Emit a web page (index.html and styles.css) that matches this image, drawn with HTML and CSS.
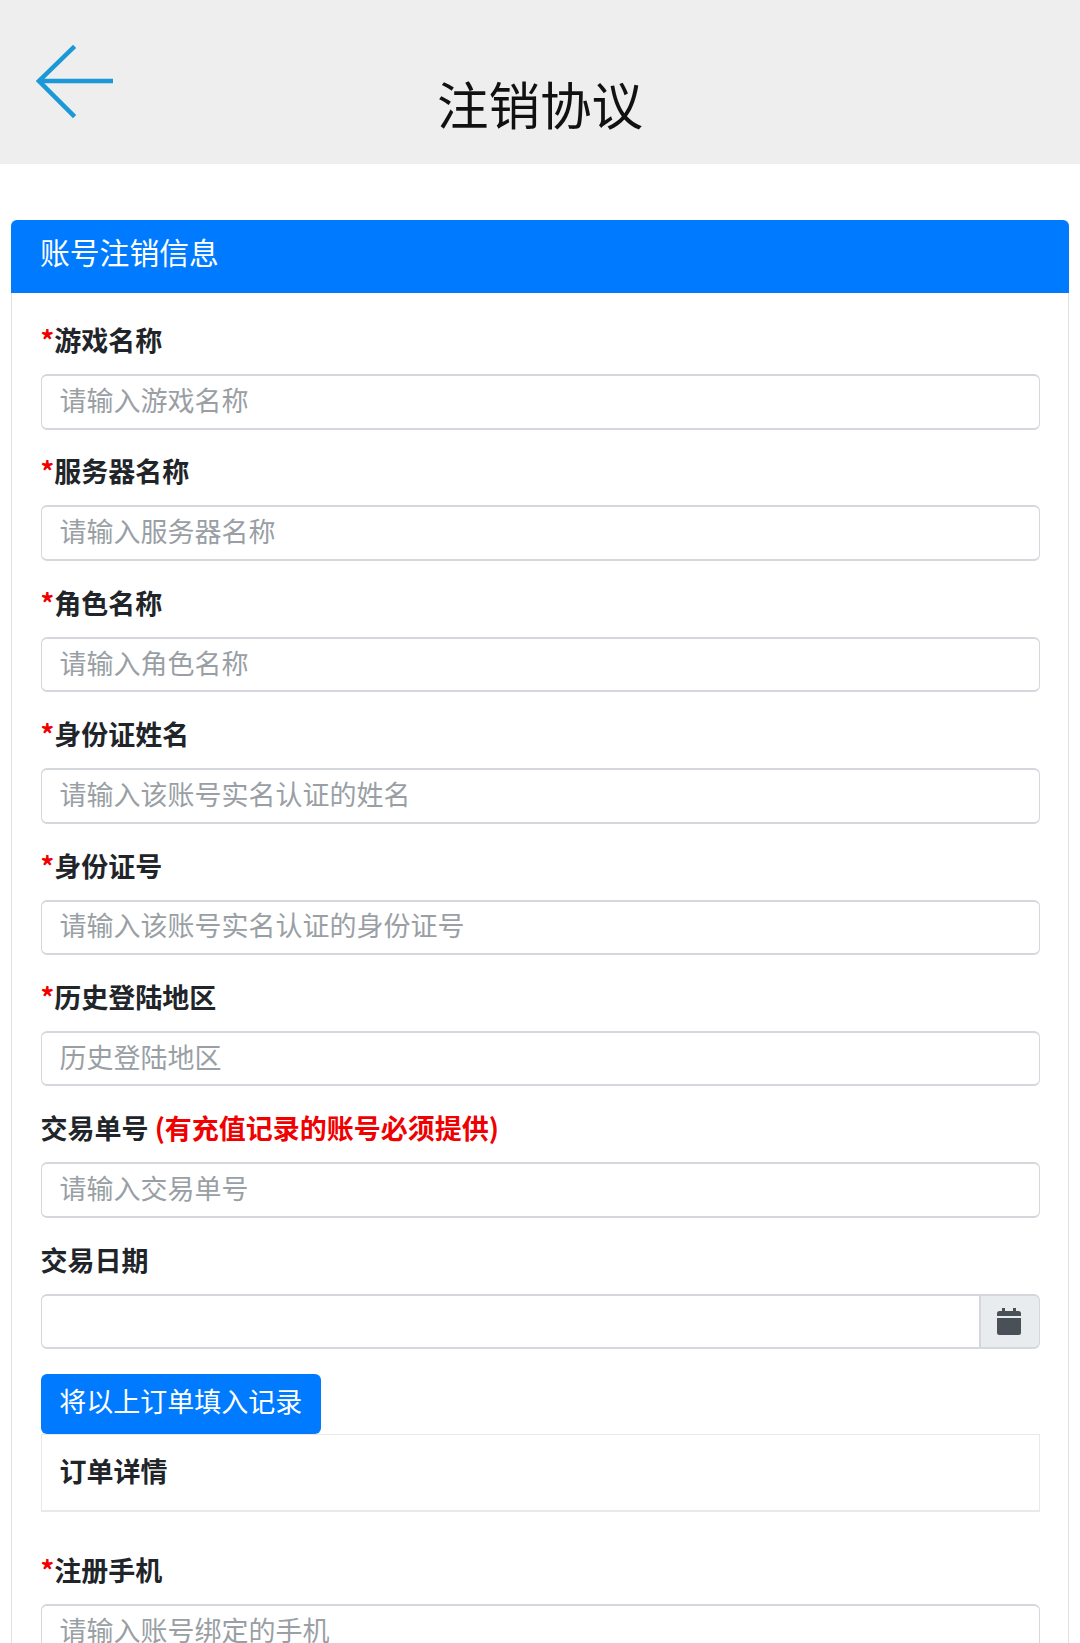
FILE: index.html
```html
<!DOCTYPE html>
<html lang="zh-CN">
<head>
  <meta charset="UTF-8" />
  <meta name="viewport" content="width=device-width, initial-scale=1.0"/>
  <title>注销协议</title>
  <link rel="stylesheet" href="styles.css">
</head>
<body>
<header class="top-bar">
  <a class="back-link" href="#" aria-label="返回">
    <svg width="84" height="76" viewBox="0 0 84 76" fill="none" stroke="#1a98d8" stroke-width="4.500" stroke-linecap="square">
      <path d="M37 5 L3 38 L37 72"/>
      <path d="M3 38 H77" stroke-linecap="butt"/>
    </svg>
  </a>
  <h1 class="page-title">注销协议</h1>
</header>

<section class="card">
  <h2 class="card-header">账号注销信息</h2>
  <form class="card-body">
    <div class="field">
      <label class="field-label"><span class="req">*</span>游戏名称</label>
      <input class="text-input" type="text" placeholder="请输入游戏名称">
    </div>
    <div class="field">
      <label class="field-label"><span class="req">*</span>服务器名称</label>
      <input class="text-input" type="text" placeholder="请输入服务器名称">
    </div>
    <div class="field">
      <label class="field-label"><span class="req">*</span>角色名称</label>
      <input class="text-input" type="text" placeholder="请输入角色名称">
    </div>
    <div class="field">
      <label class="field-label"><span class="req">*</span>身份证姓名</label>
      <input class="text-input" type="text" placeholder="请输入该账号实名认证的姓名">
    </div>
    <div class="field">
      <label class="field-label"><span class="req">*</span>身份证号</label>
      <input class="text-input" type="text" placeholder="请输入该账号实名认证的身份证号">
    </div>
    <div class="field">
      <label class="field-label"><span class="req">*</span>历史登陆地区</label>
      <input class="text-input" type="text" placeholder="历史登陆地区">
    </div>
    <div class="field">
      <label class="field-label">交易单号 <span class="req">(有充值记录的账号必须提供)</span></label>
      <input class="text-input" type="text" placeholder="请输入交易单号">
    </div>
    <div class="field">
      <label class="field-label">交易日期</label>
      <div class="input-group">
        <input class="text-input" type="text">
        <span class="input-addon">
          <svg width="24" height="27" viewBox="0 0 24 27" fill="#495057">
            <path d="M5 0h3v3h8V0h3v3h2.5A2.5 2.5 0 0 1 24 5.500V8H0V5.500A2.500 2.500 0 0 1 2.500 3H5z"/>
            <path d="M0 10h24v14.500a2.500 2.500 0 0 1-2.500 2.500h-19A2.500 2.500 0 0 1 0 24.500z"/>
          </svg>
        </span>
      </div>
    </div>
    <button class="add-btn" type="button">将以上订单填入记录</button>
    <div class="order-box">
      <h3 class="order-title">订单详情</h3>
    </div>
    <div class="field">
      <label class="field-label"><span class="req">*</span>注册手机</label>
      <input class="text-input" type="text" placeholder="请输入账号绑定的手机">
    </div>
  </form>
</section>
</body>
</html>
```

FILE: styles.css
```css
* { box-sizing: border-box; }
html, body { height: 1643px; overflow: hidden; }
body { margin: 0; background: white; color: #212529; font-family: "Noto Sans CJK SC", "Noto Sans", sans-serif; font-size: 27px; }

.top-bar { height: 164px; background: #eeeeee; display: grid; grid-template-columns: 1fr auto 1fr; align-items: start; }
.back-link { display: block; margin: 43px 0 0 36px; height: 76px; }
.page-title { margin: 69px 0 0; font-size: 51.500px; font-weight: 400; line-height: 68px; color: #111; }

.card { margin: 56px 11px 0; border: 1px solid #e2e2e2; border-radius: 6px 6px 0 0; }
.card-header { margin: -1px -1px 0; height: 73px; padding: 0 29px; background: #007bff; color: white; font-size: 29.800px; font-weight: 400; line-height: 62px; border-radius: 6px 6px 0 0; }
.card-body { padding: 27px 28.500px 0; }

.field { margin-bottom: 21.900px; }
.field-label { display: block; margin-bottom: 13.250px; font-weight: 700; line-height: 40.750px; }
.req { color: #f00000; }

.text-input { display: block; width: 100%; height: 55.500px; padding: 0 18px 5px; border: 1px solid #d4d8dc; border-top-width: 2px; border-bottom-width: 2px; border-radius: 6px; background: white; font: inherit; color: #495057; outline: none; }
.text-input::placeholder { color: #9a9fa5; opacity: 1; }

.input-group { display: flex; }
.input-group .text-input { flex: 1; border-radius: 6px 0 0 6px; }
.input-addon { width: 60px; height: 55.500px; padding-right: 2px; display: flex; align-items: center; justify-content: center; background: #e9ecef; border: 1px solid #d4d8dc; border-top-width: 2px; border-bottom-width: 2px; border-radius: 0 6px 6px 0; }

.add-btn { display: block; width: 280.500px; height: 60px; margin-top: 25px; padding: 0 0 8px; border: none; border-radius: 6px; background: #007bff; color: white; font: inherit; }
.order-box { height: 77.500px; padding: 0 18px; border: 1px solid #e9e9e9; border-bottom-width: 2px; }
.order-title { margin: 0; font-size: 27px; font-weight: 700; line-height: 71px; }
.order-box + .field { margin-top: 38.500px; }
```
